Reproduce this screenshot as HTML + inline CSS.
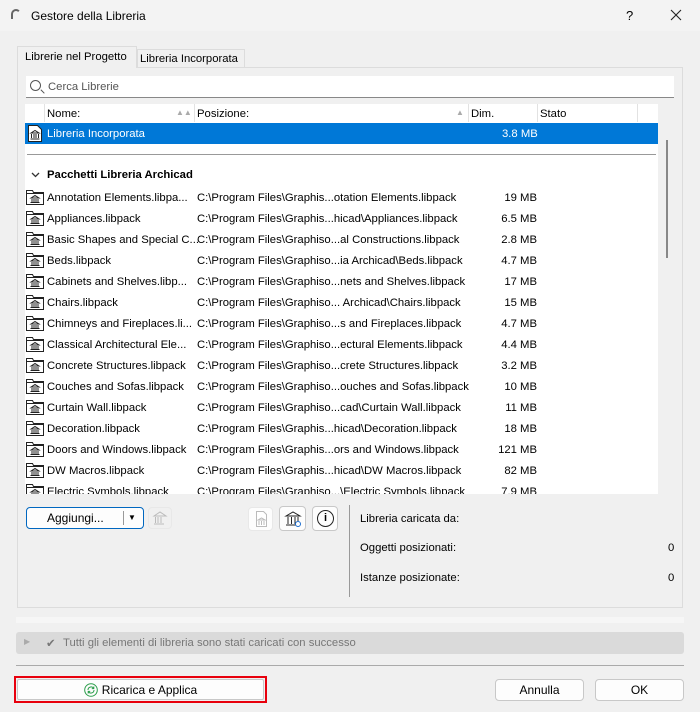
<!DOCTYPE html>
<html><head><meta charset="utf-8"><style>
*{box-sizing:border-box;margin:0;padding:0}
body{width:700px;height:712px;background:#f0f0f0;font-family:"Liberation Sans",sans-serif;font-size:11.3px;color:#000;position:relative;overflow:hidden}
.a{position:absolute;white-space:nowrap}
.row{position:absolute;left:25px;width:633px;height:21px}
.row span{position:absolute;top:5px}
.row svg{position:absolute;left:1px;top:2px}
.btn{position:absolute;background:#fdfdfd;border:1px solid #c8c8c8;border-radius:4px;text-align:center;font-size:12px}
</style></head><body>
<div class="a" style="left:0;top:0;width:700px;height:31px;background:#f3f3f3"></div>
<div class="a" style="left:11px;top:9px;width:10px;height:10px;border:2px solid #666;border-right-color:transparent;border-bottom:none;border-radius:6px 6px 0 0"></div>
<div class="a" style="left:31px;top:9px;font-size:12px">Gestore della Libreria</div>
<div class="a" style="left:626px;top:8px;font-size:13px">?</div>
<svg class="a" style="left:670px;top:9px" width="12" height="12"><path d="M1 1L11 11M11 1L1 11" stroke="#222" stroke-width="1.1"/></svg>
<div class="a" style="left:17px;top:46px;width:120px;height:22px;background:#f0f0f0;border:1px solid #dcdcdc;border-bottom:none;z-index:2"></div>
<div class="a" style="left:25px;top:51px;z-index:3">Librerie nel Progetto</div>
<div class="a" style="left:137px;top:49px;width:108px;height:19px;border:1px solid #dcdcdc;border-bottom:none;background:#f0f0f0"></div>
<div class="a" style="left:140px;top:53px">Libreria Incorporata</div>
<div class="a" style="left:17px;top:67px;width:666px;height:541px;border:1px solid #dcdcdc"></div>
<div class="a" style="left:26px;top:76px;width:648px;height:22px;background:#fff;border-bottom:1px solid #888"></div>
<div class="a" style="left:30px;top:80px;width:11px;height:11px;border:1.3px solid #555;border-radius:50%"></div>
<div class="a" style="left:40px;top:91px;width:5px;height:1.3px;background:#555;transform:rotate(45deg)"></div>
<div class="a" style="left:48px;top:81px;color:#555">Cerca Librerie</div>
<div class="a" style="left:25px;top:104px;width:633px;height:390px;background:#fff"></div>
<div class="a" style="left:44px;top:104px;width:150px;height:18px;border-left:1px solid #e2e2e2"></div>
<div class="a" style="left:194px;top:104px;border-left:1px solid #e2e2e2;height:18px"></div>
<div class="a" style="left:468px;top:104px;border-left:1px solid #e2e2e2;height:18px"></div>
<div class="a" style="left:537px;top:104px;border-left:1px solid #e2e2e2;height:18px"></div>
<div class="a" style="left:637px;top:104px;border-left:1px solid #e2e2e2;height:18px"></div>
<div class="a" style="left:47px;top:108px">Nome:</div>
<div class="a" style="left:176px;top:108px;color:#aaa;font-size:8px">▲▲</div>
<div class="a" style="left:197px;top:108px">Posizione:</div>
<div class="a" style="left:456px;top:108px;color:#aaa;font-size:8px">▲</div>
<div class="a" style="left:471px;top:108px">Dim.</div>
<div class="a" style="left:540px;top:108px">Stato</div>
<div class="a" style="left:25px;top:123px;width:633px;height:21px;background:#0078d7"></div>
<svg class="a" style="left:28px;top:125px" width="14" height="17"><path d="M0.5 0.5H9.5L13.5 4.5V16.5H0.5Z" fill="#fff" stroke="#222"/><path d="M3 8L7 5.5L11 8ZM3.5 9v4M6 9v4M8 9v4M10.5 9v4M2.5 14H11.5" stroke="#222" fill="none"/></svg>
<div class="a" style="left:47px;top:128px;color:#fff">Libreria Incorporata</div>
<div class="a" style="left:502px;top:128px;color:#fff">3.8 MB</div>
<div class="a" style="left:27px;top:154px;width:629px;border-top:1px solid #999"></div>
<svg class="a" style="left:31px;top:172px" width="9" height="6"><path d="M1 1L4.5 4.5L8 1" stroke="#333" fill="none" stroke-width="1.3"/></svg>
<div class="a" style="left:47px;top:169px;font-weight:bold">Pacchetti Libreria Archicad</div>
<div id="rows"></div>
<script>
var d=[["Annotation Elements.libpa...","C:\\Program Files\\Graphis...otation Elements.libpack","19 MB"],
["Appliances.libpack","C:\\Program Files\\Graphis...hicad\\Appliances.libpack","6.5 MB"],
["Basic Shapes and Special C...","C:\\Program Files\\Graphiso...al Constructions.libpack","2.8 MB"],
["Beds.libpack","C:\\Program Files\\Graphiso...ia Archicad\\Beds.libpack","4.7 MB"],
["Cabinets and Shelves.libp...","C:\\Program Files\\Graphiso...nets and Shelves.libpack","17 MB"],
["Chairs.libpack","C:\\Program Files\\Graphiso... Archicad\\Chairs.libpack","15 MB"],
["Chimneys and Fireplaces.li...","C:\\Program Files\\Graphiso...s and Fireplaces.libpack","4.7 MB"],
["Classical Architectural Ele...","C:\\Program Files\\Graphiso...ectural Elements.libpack","4.4 MB"],
["Concrete Structures.libpack","C:\\Program Files\\Graphiso...crete Structures.libpack","3.2 MB"],
["Couches and Sofas.libpack","C:\\Program Files\\Graphiso...ouches and Sofas.libpack","10 MB"],
["Curtain Wall.libpack","C:\\Program Files\\Graphiso...cad\\Curtain Wall.libpack","11 MB"],
["Decoration.libpack","C:\\Program Files\\Graphis...hicad\\Decoration.libpack","18 MB"],
["Doors and Windows.libpack","C:\\Program Files\\Graphis...ors and Windows.libpack","121 MB"],
["DW Macros.libpack","C:\\Program Files\\Graphis...hicad\\DW Macros.libpack","82 MB"],
["Electric Symbols.libpack","C:\\Program Files\\Graphiso...\\Electric Symbols.libpack","7.9 MB"]];
var ic='<svg width="18" height="16"><path d="M0.5 3.5V1.5H6.5L7.5 3.5H17.5V15.5H0.5Z" fill="#fff" stroke="#222"/><path d="M0.5 4.5H17.5" stroke="#222"/><path d="M5 9L9 6.5L13 9ZM6 10v3M8 10v3M10 10v3M12 10v3M4.5 13.5H13.5" stroke="#222" fill="none"/></svg>';
var h="";d.forEach(function(r,i){var t=187+i*21;
h+='<div class="row" style="top:'+t+'px;'+(i==14?'height:13px;overflow:hidden':'')+'">'+ic+'<span style="left:22px">'+r[0]+'</span><span style="left:172px">'+r[1]+'</span><span style="right:121px">'+r[2]+'</span></div>';});
document.getElementById("rows").innerHTML=h;
</script>
<div class="a" style="left:666px;top:140px;width:2px;height:118px;background:#888"></div>
<div class="a" style="left:349px;top:505px;height:92px;border-left:1px solid #999"></div>
<div class="btn" style="left:26px;top:507px;width:118px;height:22px;border:1px solid #0067c0;line-height:20px"><span style="position:absolute;left:20px">Aggiungi...</span><span style="position:absolute;left:96px;top:3px;height:14px;border-left:1px solid #999"></span><span style="position:absolute;left:101px;font-size:8px">▼</span></div>
<div class="btn" style="left:148px;top:507px;width:24px;height:22px;border-color:#e8e8e8;background:#f0f0f0"><svg width="16" height="16" style="margin-top:2px"><path d="M2 6L8 2L14 6ZM3.5 7v6M6 7v6M9 7v6M2 14H12" stroke="#bbb" fill="none"/></svg></div>
<div class="btn" style="left:248px;top:507px;width:25px;height:24px;border-color:#e8e8e8"><svg width="16" height="18" style="margin-top:2px"><path d="M3.5 1.5H10.5L13.5 4.5V16.5H3.5Z" fill="#fff" stroke="#bbb"/><path d="M5 10L8.5 8L12 10ZM6 11v4M8.5 11v4M11 11v4" stroke="#bbb" fill="none"/></svg></div>
<div class="btn" style="left:279px;top:506px;width:27px;height:25px"><svg width="18" height="18" style="margin-top:3px"><path d="M2 6L9 2L16 6ZM4 7v7M7.5 7v7M11 7v7M14 7v4M2 15H12" stroke="#222" fill="none"/><circle cx="14" cy="14" r="2.5" stroke="#1e6fd0" fill="none"/></svg></div>
<div class="btn" style="left:312px;top:506px;width:26px;height:25px"><div style="position:absolute;left:4px;top:3px;width:17px;height:17px;border:1.3px solid #222;border-radius:50%;font-size:11px;line-height:15px;font-weight:bold">i</div></div>
<div class="a" style="left:360px;top:513px">Libreria caricata da:</div>
<div class="a" style="left:360px;top:542px">Oggetti posizionati:</div>
<div class="a" style="left:668px;top:542px">0</div>
<div class="a" style="left:360px;top:572px">Istanze posizionate:</div>
<div class="a" style="left:668px;top:572px">0</div>
<div class="a" style="left:16px;top:617px;width:668px;height:6px;background:#f6f6f6"></div>
<div class="a" style="left:16px;top:632px;width:668px;height:22px;background:#dadada;border-radius:3px"></div>
<div class="a" style="left:24px;top:637px;color:#aaa;font-size:8px">▶</div>
<div class="a" style="left:46px;top:637px;color:#777">✔</div>
<div class="a" style="left:63px;top:637px;color:#777">Tutti gli elementi di libreria sono stati caricati con successo</div>
<div class="a" style="left:16px;top:665px;width:668px;border-top:1px solid #aaa"></div>
<div class="a" style="left:14px;top:676px;width:253px;height:27px;border:2px solid #e8000d"></div>
<div class="btn" style="left:17px;top:679px;width:247px;height:21px;border-radius:2px;display:flex;align-items:center;justify-content:center;gap:4px"><svg width="14" height="14"><circle cx="7" cy="7" r="6.3" stroke="#2a9d4a" fill="none"/><path d="M4 7A3 3 0 0 1 9.5 5.3M10 7A3 3 0 0 1 4.5 8.7" stroke="#2a9d4a" fill="none"/><path d="M9.8 3.5V5.6H7.8M4.2 10.5V8.4H6.2" stroke="#2a9d4a" fill="none"/></svg><span>Ricarica e Applica</span></div>
<div class="btn" style="left:495px;top:679px;width:89px;height:22px;line-height:20px">Annulla</div>
<div class="btn" style="left:595px;top:679px;width:89px;height:22px;line-height:20px">OK</div>
</body></html>
